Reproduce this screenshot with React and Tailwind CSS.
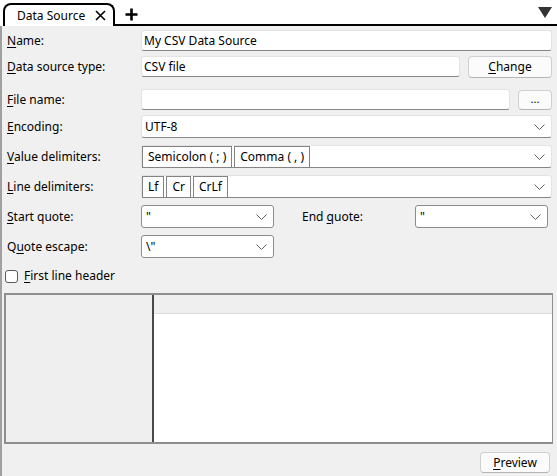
import { useState } from 'react';

function U({ children }) {
  return <span className="underline underline-offset-2">{children}</span>;
}

function Chevron() {
  return (
    <svg width="11" height="6" viewBox="0 0 11 6" className="shrink-0">
      <path d="M0.5 0.5 L5.5 5.5 L10.5 0.5" fill="none" stroke="#5f5f5f" strokeWidth="1" />
    </svg>
  );
}

function Row({ label, children, top = 'mt-0', h = 'h-[21px]' }) {
  return (
    <div className={`flex items-center ${h} ${top}`}>
      <div className="w-[139px] pl-[5px] shrink-0">{label}</div>
      {children}
    </div>
  );
}

function TextBox({ value, className = '' }) {
  return (
    <div
      className={`h-[21px] bg-white border border-[#e3e3e3] border-b-[#868686] rounded-[3px] px-[2px] flex items-center ${className}`}
    >
      {value}
    </div>
  );
}

function Combo({ children, className = '' }) {
  return (
    <div
      className={`h-[23px] bg-white border border-[#e3e3e3] border-b-[#868686] rounded-[3px] flex items-center pr-[6px] ${className}`}
    >
      <div className="flex-1 flex items-center gap-[2px] min-w-0 h-full">{children}</div>
      <Chevron />
    </div>
  );
}

function Chip({ text }) {
  return (
    <div className="h-[22px] px-[5px] bg-white border border-[#838383] flex items-center leading-none">
      {text}
    </div>
  );
}

function SmallCombo({ value }) {
  return (
    <div className="w-[133px] h-[23px] bg-white border border-[#8c8c8c] rounded-[3px] flex items-center pl-[4px] pr-[6px]">
      <div className="flex-1">{value}</div>
      <Chevron />
    </div>
  );
}

function Button({ children, className = '' }) {
  return (
    <div
      className={`bg-[#fbfbfb] border border-[#d0d0d0] border-b-[#b5b5b5] rounded-[4px] flex items-center justify-center ${className}`}
    >
      {children}
    </div>
  );
}

export default function App() {
  const [header, setHeader] = useState(false);

  return (
    <div
      className="w-[557px] h-[476px] bg-[#f0f0f0] text-[12px] text-black flex flex-col overflow-hidden"
      style={{ fontFamily: '"Noto Sans", "Liberation Sans", sans-serif' }}
    >
      {/* tab strip */}
      <div className="h-[26px] bg-white flex items-end relative shrink-0">
        <div className="ml-[3px] w-[112px] h-[23px] border-2 border-b-0 border-black rounded-t-[8px] flex items-center pl-[12px] pr-[7px] bg-white relative z-10">
          <span className="flex-1 leading-none">Data Source</span>
          <svg width="11" height="11" viewBox="0 0 11 11">
            <path d="M1 1 L10 10 M10 1 L1 10" stroke="#000" strokeWidth="1.6" />
          </svg>
        </div>
        <div className="flex-1 h-[2px] bg-black" />
        <div className="absolute left-[125px] top-[8px]">
          <svg width="13" height="13" viewBox="0 0 13 13">
            <path d="M6.5 0.5 V12.5 M0.5 6.5 H12.5" stroke="#000" strokeWidth="2.6" />
          </svg>
        </div>
        <div className="absolute right-[5px] top-[7px]">
          <svg width="14" height="11" viewBox="0 0 14 11">
            <path d="M0 0 H14 L7 11 Z" fill="#333" />
          </svg>
        </div>
      </div>

      {/* form */}
      <div className="flex-1 border-l-2 border-[#a0a0a0] flex flex-col">
        <div className="flex flex-col pt-[3px] pr-[5px]">
          <Row label={<><U>N</U>ame:</>} top="mt-[1px]">
            <TextBox value="My CSV Data Source" className="flex-1" />
          </Row>
          <Row label={<><U>D</U>ata source type:</>} top="mt-[5px]">
            <TextBox value="CSV file" className="flex-1" />
            <Button className="w-[84px] ml-[8px] h-[22px]">
              <span><U>C</U>hange</span>
            </Button>
          </Row>
          <Row label={<><U>F</U>ile name:</>} top="mt-[12px]">
            <TextBox value="" className="flex-1" />
            <Button className="w-[34px] ml-[8px] h-[20px] text-[11px]">...</Button>
          </Row>
          <Row label={<><U>E</U>ncoding:</>} top="mt-[5px]" h="h-[23px]">
            <Combo className="flex-1 pl-[3px]">UTF-8</Combo>
          </Row>
          <Row label={<><U>V</U>alue delimiters:</>} top="mt-[7px]" h="h-[23px]">
            <Combo className="flex-1">
              <Chip text="Semicolon ( ; )" />
              <Chip text="Comma ( , )" />
            </Combo>
          </Row>
          <Row label={<><U>L</U>ine delimiters:</>} top="mt-[7px]" h="h-[23px]">
            <Combo className="flex-1">
              <Chip text="Lf" />
              <Chip text="Cr" />
              <Chip text="CrLf" />
            </Combo>
          </Row>
          <div className="flex items-center h-[23px] mt-[7px]">
            <div className="w-[139px] pl-[5px] shrink-0"><U>S</U>tart quote:</div>
            <SmallCombo value={'"'} />
            <div className="w-[141px] pl-[28px]">End <U>q</U>uote:</div>
            <SmallCombo value={'"'} />
          </div>
          <div className="flex items-center h-[23px] mt-[7px]">
            <div className="w-[139px] pl-[5px] shrink-0">Q<U>u</U>ote escape:</div>
            <SmallCombo value={'\\"'} />
          </div>
          <label className="flex items-center h-[18px] mt-[9px] pl-[3px] gap-[6px]">
            <input
              type="checkbox"
              checked={header}
              onChange={() => setHeader(!header)}
              className="appearance-none w-[13px] h-[13px] border border-[#5a5a5a] rounded-[3px] bg-white"
            />
            <span><U>F</U>irst line header</span>
          </label>
        </div>

        {/* preview grid */}
        <div className="mt-[8px] ml-[2px] mr-[4px] h-[151px] border-2 border-[#8e8e8e] border-r flex">
          <div className="w-[148px] bg-[#efefef] border-r-2 border-[#4a4a4a]" />
          <div className="flex-1 flex flex-col">
            <div className="h-[19px] bg-[#efefef] border-b border-[#dcdcdc]" />
            <div className="flex-1 bg-white" />
          </div>
        </div>

        <div className="flex justify-end pr-[7px] mt-[8px]">
          <Button className="w-[70px] h-[21px]">
            <span><U>P</U>review</span>
          </Button>
        </div>
      </div>
    </div>
  );
}
